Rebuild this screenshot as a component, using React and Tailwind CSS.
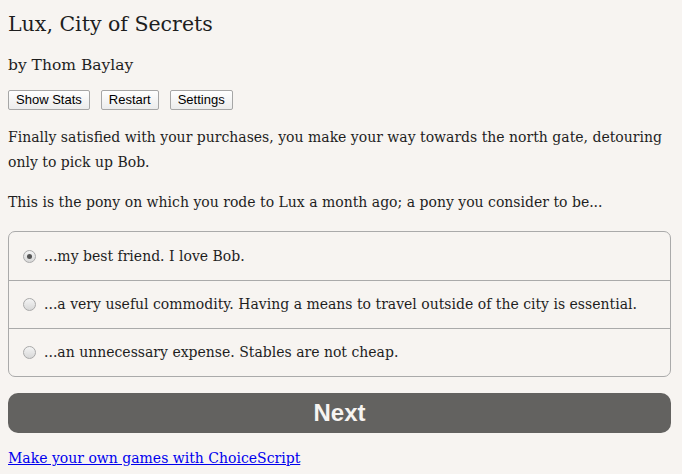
import React, { useState } from 'react';

const options = [
  '...my best friend. I love Bob.',
  '...a very useful commodity. Having a means to travel outside of the city is essential.',
  '...an unnecessary expense. Stables are not cheap.',
];

function Radio({ checked }) {
  return (
    <span className="w-[13px] h-[13px] shrink-0 rounded-full border border-[#a9a9a9] bg-gradient-to-b from-[#f4f4f4] to-[#d8d8d8] flex items-center justify-center">
      {checked && <span className="w-[5px] h-[5px] rounded-full bg-[#555]" />}
    </span>
  );
}

export default function App() {
  const [choice, setChoice] = useState(0);

  return (
    <div className="min-h-[474px] bg-[#f7f4f1] text-[#1e1e1e] pl-2 pr-[11px] pt-[9px] font-['DejaVu_Serif',serif]">
      {/* Header */}
      <h1 className="text-[20.5px] leading-[30px]">Lux, City of Secrets</h1>
      <h2 className="text-[15.5px] leading-[24px] mt-[14px]">by Thom Baylay</h2>

      <div className="flex gap-[11px] mt-[13px] font-['Liberation_Sans',sans-serif] text-[13px]">
        {['Show Stats', 'Restart', 'Settings'].map((b) => (
          <button
            key={b}
            className="h-5 px-[7px] leading-[18px] border border-[#a6a6a6] rounded-[2px] bg-gradient-to-b from-white to-[#ececec] text-black"
          >
            {b}
          </button>
        ))}
      </div>

      {/* Story text */}
      <p className="text-[14px] leading-[25px] mt-[15px]">
        Finally satisfied with your purchases, you make your way towards the north gate, detouring only to pick up Bob.
      </p>
      <p className="text-[14px] leading-[25px] mt-[15px]">
        This is the pony on which you rode to Lux a month ago; a pony you consider to be...
      </p>

      {/* Choices */}
      <div className="mt-4 border border-[#aaa] rounded-[7px] overflow-hidden">
        {options.map((o, i) => (
          <label
            key={i}
            onClick={() => setChoice(i)}
            className={`h-12 flex items-center gap-[8px] pl-[14px] text-[14px] cursor-pointer ${i > 0 ? 'border-t border-[#aaa]' : ''}`}
          >
            <Radio checked={choice === i} />
            <span>{o}</span>
          </label>
        ))}
      </div>

      <button className="mt-4 w-full h-10 rounded-[10px] bg-[#636260] text-[#f7f4f1] font-['Liberation_Sans',sans-serif] font-bold text-[24px]">
        Next
      </button>

      <p className="mt-[13px] text-[14px] leading-[25px]">
        <a href="#" className="text-[#0000ee] underline">Make your own games with ChoiceScript</a>
      </p>
    </div>
  );
}
